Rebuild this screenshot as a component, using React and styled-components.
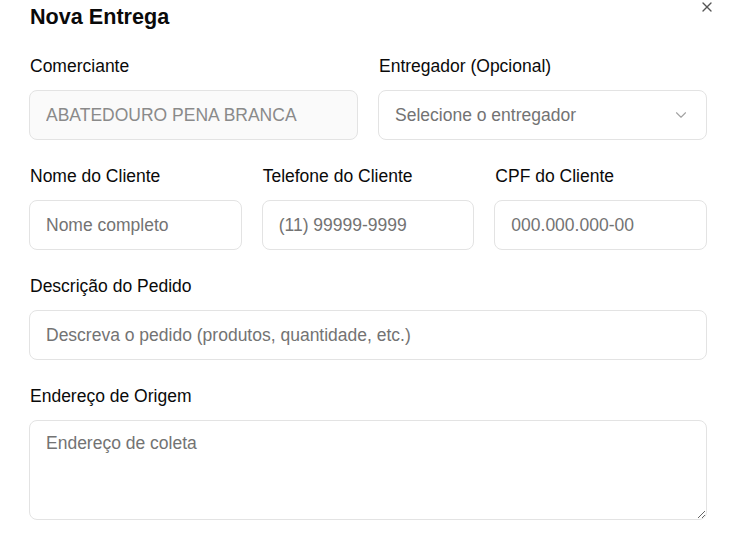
import React from 'react'
import styled, { createGlobalStyle } from 'styled-components'
import { X, ChevronDown } from 'lucide-react'

const GlobalStyle = createGlobalStyle`
  html, body {
    margin: 0;
    padding: 0;
    background: #ffffff;
    font-family: "Liberation Sans", Arial, sans-serif;
    color: #0a0a0a;
  }
  * { box-sizing: border-box; }
`

const Dialog = styled.div`
  position: relative;
  width: 736px;
  height: 533px;
  overflow: hidden;
  padding: 3px 29px 0 29px;
`

const Title = styled.h2`
  margin: 0 0 0 1px;
  font-size: 21.6px;
  line-height: 28px;
  font-weight: 700;
`

const CloseButton = styled.button`
  position: absolute;
  top: -1px;
  right: 21px;
  width: 16px;
  height: 16px;
  padding: 0;
  border: none;
  background: none;
  color: #555;
  display: flex;
  align-items: center;
  justify-content: center;
  cursor: pointer;
`

const Form = styled.div`
  display: flex;
  flex-direction: column;
  gap: 24px;
  margin-top: 23px;
`

const Row = styled.div`
  display: grid;
  grid-template-columns: repeat(${p => p.cols || 1}, 1fr);
  gap: 20px;
`

const Field = styled.div`
  display: flex;
  flex-direction: column;
  gap: 12px;
`

const Label = styled.label`
  font-size: 17.5px;
  line-height: 24px;
  padding-left: 1px;
  color: #0a0a0a;
`

const Input = styled.input`
  height: 50px;
  width: 100%;
  border: 1px solid #e3e3e3;
  border-radius: 8px;
  padding: 0 16px;
  font-family: inherit;
  font-size: 17.5px;
  color: #0a0a0a;
  background: ${p => (p.disabled ? '#fafafa' : '#ffffff')};
  outline: none;
  &::placeholder { color: #737373; }
  &:disabled { color: #8a8a8a; }
`

const SelectBox = styled.div`
  height: 50px;
  border: 1px solid #e3e3e3;
  border-radius: 8px;
  padding: 0 16px 0 16px;
  display: flex;
  align-items: center;
  justify-content: space-between;
  font-size: 17.5px;
  color: #737373;
  background: #ffffff;
  svg { color: #a3a3a3; }
`

const TextArea = styled.textarea`
  height: 100px;
  width: 100%;
  border: 1px solid #e3e3e3;
  border-radius: 8px;
  padding: 12px 16px;
  font-family: inherit;
  font-size: 17.5px;
  line-height: 20px;
  resize: vertical;
  outline: none;
  &::placeholder { color: #737373; }
`

export default function App() {
  return (
    <>
      <GlobalStyle />
      <Dialog>
        <Title>Nova Entrega</Title>
        <CloseButton aria-label="Fechar">
          <X size={16} strokeWidth={2} />
        </CloseButton>
        <Form>
          <Row cols={2}>
            <Field>
              <Label>Comerciante</Label>
              <Input disabled value="ABATEDOURO PENA BRANCA" readOnly />
            </Field>
            <Field>
              <Label>Entregador (Opcional)</Label>
              <SelectBox>
                <span>Selecione o entregador</span>
                <ChevronDown size={18} strokeWidth={1.5} />
              </SelectBox>
            </Field>
          </Row>
          <Row cols={3}>
            <Field>
              <Label>Nome do Cliente</Label>
              <Input placeholder="Nome completo" />
            </Field>
            <Field>
              <Label>Telefone do Cliente</Label>
              <Input placeholder="(11) 99999-9999" />
            </Field>
            <Field>
              <Label>CPF do Cliente</Label>
              <Input placeholder="000.000.000-00" />
            </Field>
          </Row>
          <Field>
            <Label>Descrição do Pedido</Label>
            <Input placeholder="Descreva o pedido (produtos, quantidade, etc.)" />
          </Field>
          <Field>
            <Label>Endereço de Origem</Label>
            <TextArea placeholder="Endereço de coleta" />
          </Field>
        </Form>
      </Dialog>
    </>
  )
}
